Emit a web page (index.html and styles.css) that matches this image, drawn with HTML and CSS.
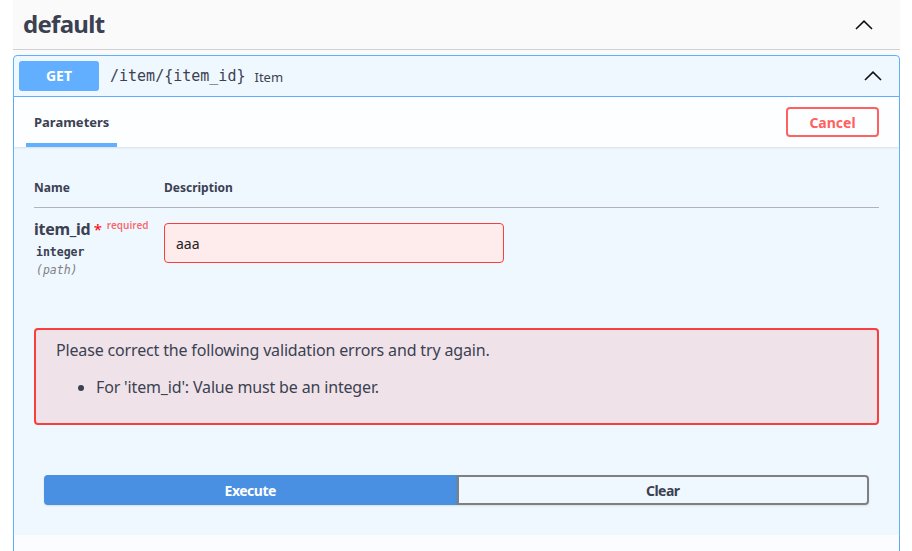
FILE: index.html
```html
<!DOCTYPE html>
<html>
<head>
<meta charset="utf-8">
<link rel="stylesheet" href="styles.css">
</head>
<body>
<div class="wrap">
  <div class="tag">
    <h3 class="tag-title">default</h3>
    <svg class="chev" width="18" height="10" viewBox="0 0 18 10"><polyline points="1,9 9,1.2 17,9" fill="none" stroke="#111" stroke-width="1.6"/></svg>
  </div>
  <div class="opblock">
    <div class="summary">
      <span class="method">GET</span>
      <span class="path">/item/{item_id}</span>
      <span class="summary-desc">Item</span>
      <svg class="chev chev-sum" width="18" height="10" viewBox="0 0 18 10"><polyline points="1,9 9,1.2 17,9" fill="none" stroke="#111" stroke-width="1.6"/></svg>
    </div>
    <div class="body">
      <div class="section-header">
        <div class="tab"><span class="tab-label">Parameters</span></div>
        <button class="cancel">Cancel</button>
      </div>
      <div class="params">
        <table class="ptable">
          <thead>
            <tr><th class="col-name">Name</th><th>Description</th></tr>
          </thead>
          <tbody>
            <tr>
              <td class="col-name">
                <div class="pname">item_id<span class="star">&nbsp;*</span><span class="req">required</span></div>
                <div class="ptype">integer</div>
                <div class="pin">(path)</div>
              </td>
              <td><input class="pinput" type="text" value="aaa"></td>
            </tr>
          </tbody>
        </table>
      </div>
      <div class="errors">
        <p class="err-title">Please correct the following validation errors and try again.</p>
        <ul class="err-list">
          <li>For 'item_id': Value must be an integer.</li>
        </ul>
      </div>
      <div class="btn-group">
        <button class="btn-exec">Execute</button>
        <button class="btn-clear">Clear</button>
      </div>
      <div class="resp-header"></div>
    </div>
  </div>
</div>
</body>
</html>
```
FILE: styles.css
```css
* { box-sizing: border-box; }
html, body { margin: 0; padding: 0; background: #fff; }
body { font-family: "Noto Sans", "Open Sans", sans-serif; color: #3b4151; }

.wrap {
  margin: 0 12px 0 13px;
  background: #fafafa;
  height: 551px;
  overflow: hidden;
}

.tag {
  height: 50px;
  display: flex;
  align-items: center;
  justify-content: space-between;
  padding: 0 27px 0 10px;
  border-bottom: 1px solid #cfd0d3;
  margin-bottom: 5px;
}
.tag-title {
  margin: 0;
  font-size: 24px;
  font-weight: 700;
  line-height: 30px;
  letter-spacing: -0.7px;
  color: #3b4151;
  position: relative;
  top: -1px;
}
.chev { display: block; }

.opblock {
  border: 1px solid #61affe;
  border-radius: 4px;
  background: #eff7ff;
}

.summary {
  display: flex;
  align-items: center;
  padding: 5px;
  border-bottom: 1px solid #61affe;
  height: 41px;
}
.method {
  width: 80px;
  height: 30px;
  line-height: 30px;
  text-align: center;
  background: #61affe;
  color: #fff;
  font-weight: 700;
  font-size: 14px;
  border-radius: 3px;
}
.path {
  margin-left: 11px;
  font-family: "DejaVu Sans Mono", monospace;
  font-size: 15px;
  color: #3b4151;
}
.summary-desc {
  margin-left: 9px;
  font-size: 13px;
  color: #3b4151;
  flex: 1;
  position: relative;
  top: 1px;
}
.chev-sum { margin-right: 12px; }

.section-header {
  height: 50px;
  display: flex;
  align-items: center;
  justify-content: space-between;
  padding: 0 20px 0 12px;
  background: #fcfeff;
  box-shadow: 0 1px 2px rgba(0, 0, 0, .1);
  position: relative;
}
.tab {
  position: relative;
  padding: 0 8px;
}
.tab-label {
  font-size: 13px;
  font-weight: 700;
  line-height: 19px;
  display: block;
}
.tab::after {
  content: "";
  position: absolute;
  left: 0;
  right: 0;
  bottom: -15px;
  height: 4px;
  background: #61affe;
}
.cancel {
  width: 93px;
  height: 30px;
  border: 2px solid #ff6060;
  border-radius: 4px;
  background: transparent;
  color: #ff6060;
  font-family: "Noto Sans", sans-serif;
  font-weight: 700;
  font-size: 14px;
  padding: 0;
}

.params { padding: 20px 20px 20px; }
.ptable {
  width: 100%;
  border-collapse: collapse;
}
.ptable th {
  text-align: left;
  font-size: 12px;
  font-weight: 700;
  line-height: 15px;
  padding: 13px 0 12px;
  border-bottom: 1px solid #b1b3b9;
}
.ptable td {
  vertical-align: top;
  padding: 10px 0;
}
.col-name { width: 130px; }
.pname {
  font-size: 16px;
  font-weight: 700;
  line-height: 22px;
  letter-spacing: -0.3px;
  white-space: nowrap;
}
.star { color: #f00; font-size: 15px; font-weight: 400; }
.req {
  font-size: 10px;
  color: rgba(255, 0, 0, .6);
  font-weight: 600;
  letter-spacing: 0;
  padding-left: 5px;
  position: relative;
  top: -6px;
}
.ptype {
  font-family: "DejaVu Sans Mono", monospace;
  font-size: 11.5px;
  font-weight: 700;
  line-height: 17px;
  margin-top: 2px;
  padding-left: 2px;
}
.pin {
  font-family: "DejaVu Sans Mono", monospace;
  font-size: 11.5px;
  font-style: italic;
  color: #808080;
  line-height: 17px;
  margin-top: 1px;
  padding-left: 2px;
}
.pinput {
  display: block;
  margin-top: 5px;
  width: 340px;
  height: 40px;
  border: 1px solid #f93e3e;
  border-radius: 4px;
  background: #feebeb;
  padding: 0 11px;
  font-family: "Noto Sans", sans-serif;
  font-size: 14px;
  color: #222;
  outline: none;
}

.errors {
  margin: 19px 20px 20px;
  border: 2px solid #f93e3e;
  border-radius: 4px;
  background: #efe3e9;
  padding: 9px 20px 12px;
  font-size: 16px;
  line-height: 22px;
  letter-spacing: -0.16px;
  color: #3b4151;
}
.err-title { margin: 0; }
.err-list { margin: 15px 0 13px; padding-left: 40px; }

.btn-group {
  display: flex;
  padding: 30px 30px 30px;
}
.btn-group button {
  flex: 1;
  height: 30px;
  font-family: "Noto Sans", sans-serif;
  font-weight: 700;
  font-size: 14px;
  letter-spacing: -0.5px;
  padding: 0;
}
.btn-exec {
  background: #4990e2;
  color: #fff;
  border: 2px solid #4990e2;
  border-radius: 4px 0 0 4px;
  box-shadow: 0 1px 2px rgba(0, 0, 0, .1);
}
.btn-clear {
  background: transparent;
  color: #3b4151;
  border: 2px solid #808080;
  border-radius: 0 4px 4px 0;
  box-shadow: 0 1px 2px rgba(0, 0, 0, .1);
}

.resp-header {
  height: 50px;
  background: #fafcff;
  box-shadow: 0 1px 2px rgba(0, 0, 0, .1);
}
```
